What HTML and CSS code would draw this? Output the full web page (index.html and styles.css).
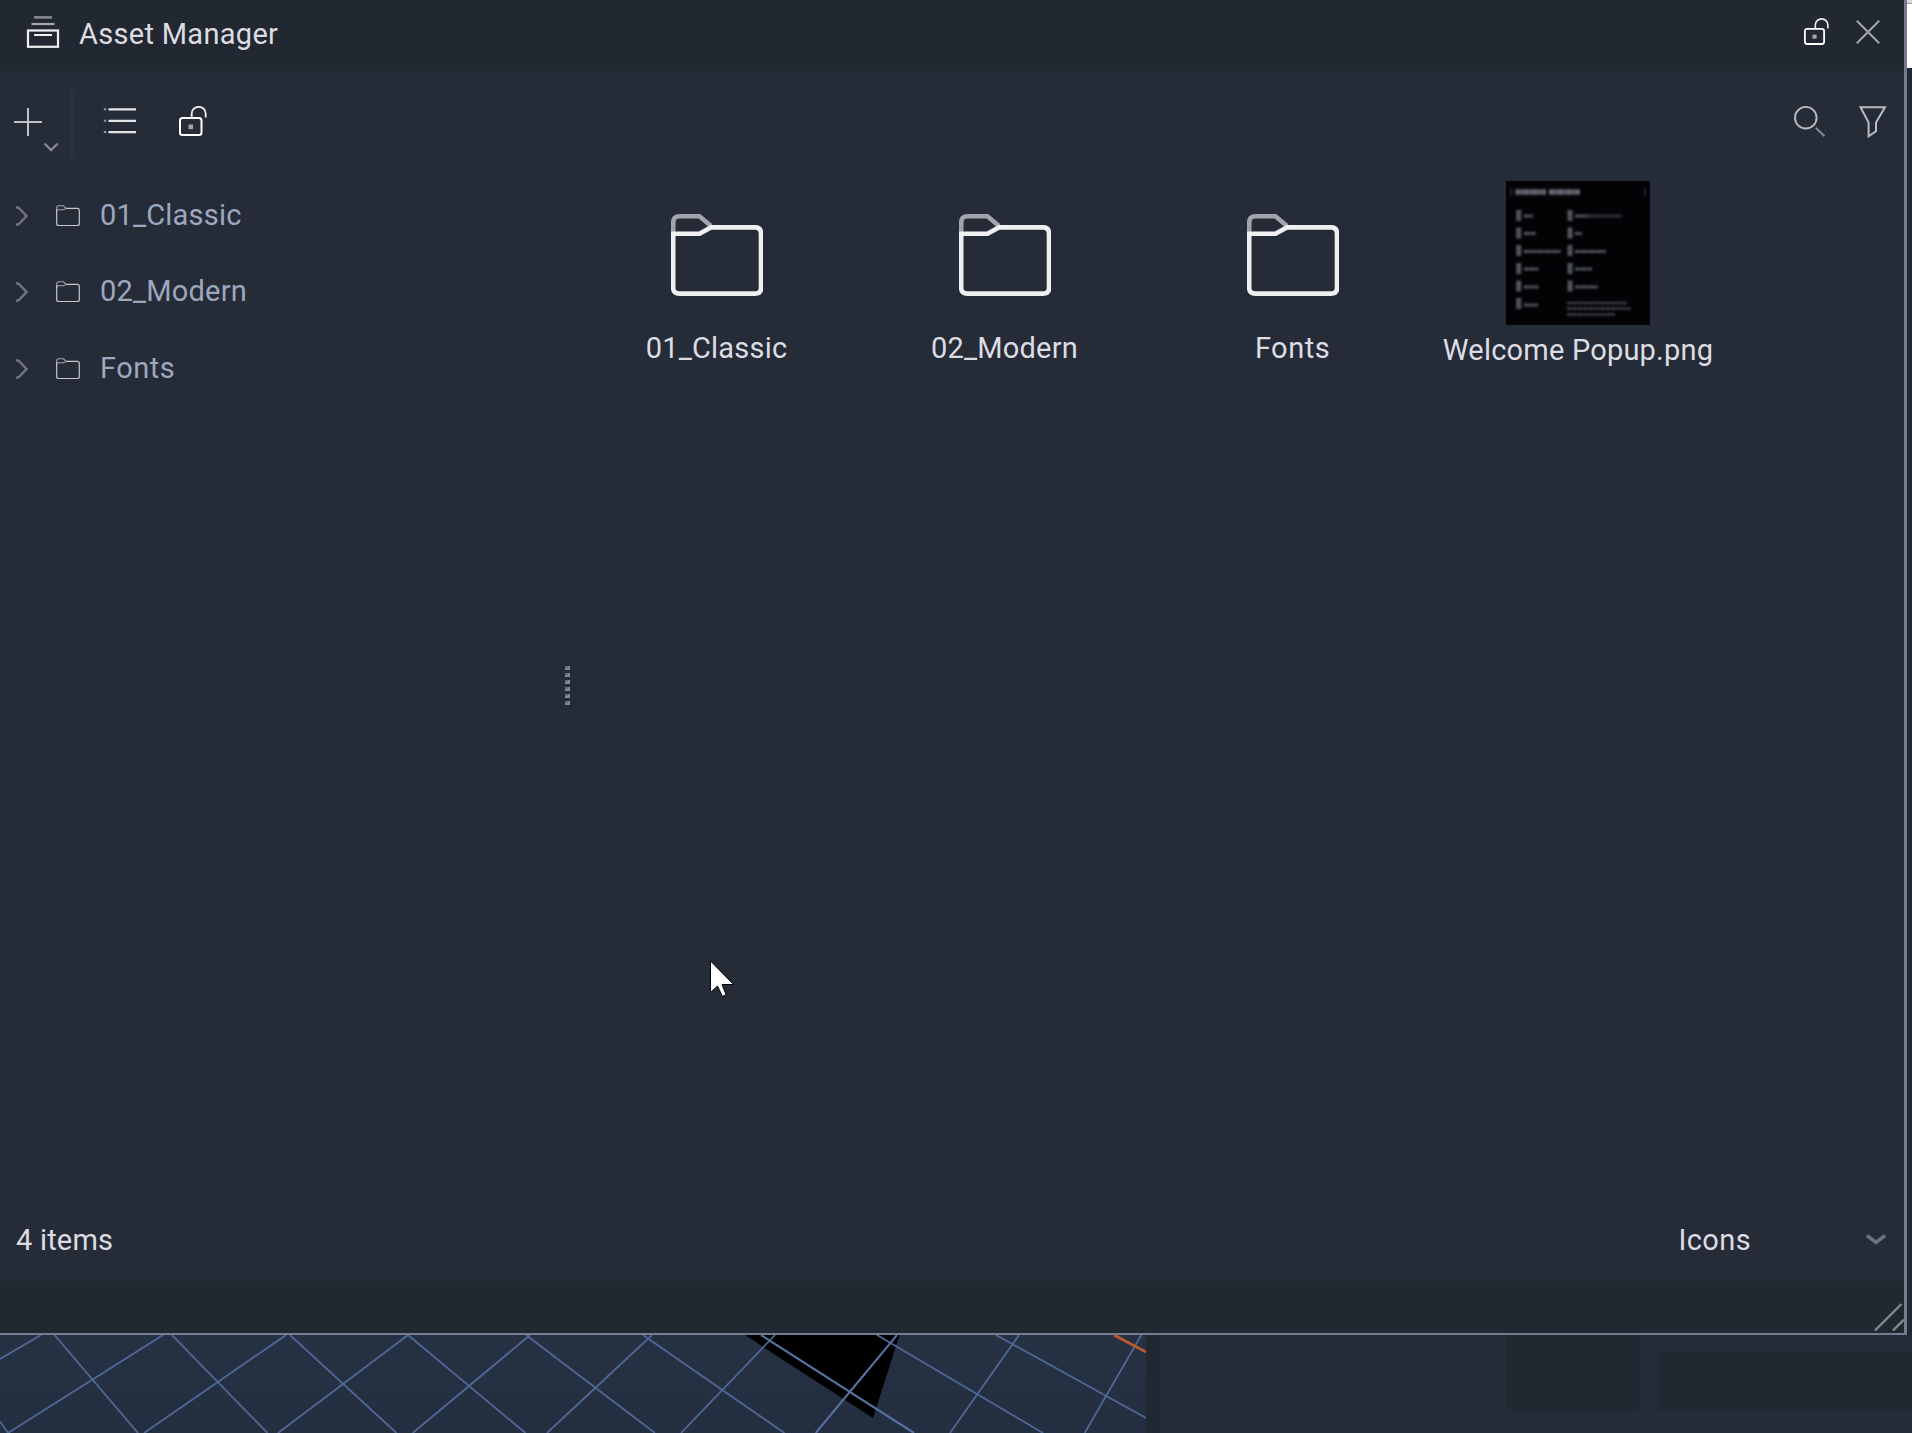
FILE: index.html
```html
<!DOCTYPE html>
<html lang="en">
<head>
<meta charset="utf-8">
<title>Asset Manager</title>
<link rel="stylesheet" href="styles.css">
</head>
<body>
<svg class="defs" width="0" height="0" aria-hidden="true">
  <symbol id="folder-large" viewBox="0 0 92 84">
    <path d="M2.2 20V9.5Q2.2 3.2 8.5 3.2H28.5L40 13" fill="none" stroke="#a1a4aa" stroke-width="4.6"/>
    <path d="M2.2 20.8H28.5L40 14.4H84Q90 14.4 90 20.5V75Q90 80.6 84 80.6H8.5Q2.2 80.6 2.2 75Z" fill="none" stroke="#eff0f1" stroke-width="4.6"/>
  </symbol>
  <symbol id="folder-small" viewBox="0 0 24 22">
    <path d="M.7 7V3Q.7 .8 3 .8H7.5L10 3.4M.7 4.8H7.5L10 3.4" fill="none" stroke="#a3a6aa" stroke-width="1.1"/>
    <path d="M.7 4.8V18.5Q.7 20.5 2.7 20.5H21.3Q23.3 20.5 23.3 18.5V5.4Q23.3 3.4 21.3 3.4H10" fill="none" stroke="#c5c7ca" stroke-width="1.2"/>
  </symbol>
  <symbol id="unlock" viewBox="0 0 28 30">
    <rect x="1" y="12" width="21.5" height="17" rx="2.5" fill="none" stroke="#fff" stroke-width="2"/>
    <rect x="9.5" y="18.5" width="4.6" height="4.6" fill="#a3a6ad"/>
    <path d="M12.7 12V7.5A7 6.7 0 0 1 26.7 7.5V11.5" fill="none" stroke="#eceded" stroke-width="1.8"/>
  </symbol>
  <symbol id="chevron-right" viewBox="0 0 14 22">
    <path d="M1 2L4 3L11.5 11L4 19L1 20" fill="none" stroke="#70747b" stroke-width="2.5"/>
  </symbol>
</svg>
<div class="desktop">
  <div class="upper">
    <section class="window">
      <header class="titlebar">
        <svg class="app-icon" width="34" height="34" viewBox="0 0 34 34">
          <path d="M8 3.4H26" stroke="#8d9197" stroke-width="2.4"/>
          <path d="M5.5 10H28.5" stroke="#a5a8ad" stroke-width="2.2"/>
          <rect x="2" y="16.5" width="30" height="16.3" fill="none" stroke="#eef0f0" stroke-width="2.2"/>
          <path d="M8 21H26" stroke="#eef0f0" stroke-width="2"/>
        </svg>
        <h1 class="title">Asset Manager</h1>
        <svg class="title-lock" viewBox="0 0 28 30"><use href="#unlock"/></svg>
        <svg class="close" width="24" height="24" viewBox="0 0 24 24"><path d="M.8.8L23.2 23.2M23.2.8L.8 23.2" stroke="#a5a8aa" stroke-width="2"/></svg>
      </header>
      <div class="toolbar">
        <svg class="add" width="46" height="46" viewBox="0 0 46 46">
          <path d="M0 14H28M14 0V28" stroke="#c0c3c6" stroke-width="2"/>
          <path d="M30.5 35.5L37 42L43.8 35.5" fill="none" stroke="#84888e" stroke-width="2.4"/>
        </svg>
        <span class="divider"></span>
        <svg class="list" width="33" height="28" viewBox="0 0 33 28">
          <path d="M5.5 2.3H33M5.5 13.8H33M5.5 25.1H33" stroke="#e1e4e5" stroke-width="2.2"/>
          <path d="M.8 2.3H3.2M.8 13.8H3.2M.8 25.1H3.2" stroke="#9599a0" stroke-width="2"/>
        </svg>
        <svg class="tool-lock" viewBox="0 0 28 30"><use href="#unlock"/></svg>
        <svg class="search" width="32" height="32" viewBox="0 0 32 32">
          <circle cx="11.8" cy="11.7" r="10.8" fill="none" stroke="#b9bdbf" stroke-width="1.9"/>
          <path d="M21.8 21.7L30.5 30.3" stroke="#81858c" stroke-width="2.2"/>
        </svg>
        <svg class="filter" width="28" height="32" viewBox="0 0 28 32"><path d="M1.5 1.3H26L17 16.5V25.3L9.6 30.3V16.5Z" fill="none" stroke="#b8bcbf" stroke-width="2"/></svg>
      </div>
      <main class="content">
        <nav class="tree">
          <div class="tree-row"><svg class="chev"><use href="#chevron-right"/></svg><svg class="small"><use href="#folder-small"/></svg><span>01_Classic</span></div>
          <div class="tree-row"><svg class="chev"><use href="#chevron-right"/></svg><svg class="small"><use href="#folder-small"/></svg><span>02_Modern</span></div>
          <div class="tree-row"><svg class="chev"><use href="#chevron-right"/></svg><svg class="small"><use href="#folder-small"/></svg><span class="wide">Fonts</span></div>
        </nav>
        <div class="splitter"><i></i><i></i><i></i><i></i><i></i><i></i></div>
        <div class="assets">
          <div class="asset"><svg class="large"><use href="#folder-large"/></svg><span>01_Classic</span></div>
          <div class="asset"><svg class="large"><use href="#folder-large"/></svg><span>02_Modern</span></div>
          <div class="asset"><svg class="large"><use href="#folder-large"/></svg><span class="wide">Fonts</span></div>
          <div class="asset picture">
            <svg class="thumb" width="144" height="144" viewBox="0 0 144 144">
              <defs><filter id="soft" x="-10%" y="-10%" width="120%" height="120%"><feGaussianBlur stdDeviation="1"/></filter></defs>
              <rect width="144" height="144" fill="#030306"/>
              <g filter="url(#soft)" fill="none">
                <path d="M9.5 11H40M43 11H74" stroke="#666a72" stroke-width="5.5" stroke-dasharray="5 .5 3 .4"/>
                <path d="M5 7V15M139 7V15" stroke="#191b20" stroke-width="3"/>
                <g stroke="#50545d" stroke-width="5">
                  <path d="M12.7 29V40M12.7 46.5V57.5M12.7 64V75M12.7 82V93M12.7 99.5V110.5M12.7 117V128"/>
                  <path d="M64 29V40M64 46.5V57.5M64 64V75M64 82V93M64 99.5V110.5"/>
                </g>
                <g stroke="#555961" stroke-width="3.2" stroke-dasharray="4 .5 2.5 .4">
                  <path d="M18 35H27M18 52.5H30M18 70.5H55M18 88H33M18 106H33M18 124H32"/>
                  <path d="M69 35H82M69 52.5H76M69 70.5H100M69 88H86M69 106H92"/>
                </g>
                <path d="M82 35H116" stroke="#2b2e34" stroke-width="3.5" stroke-dasharray="4 .5"/>
                <path d="M61 122H121M61 127.5H125M61 133.5H109" stroke="#3c4047" stroke-width="2.3" stroke-dasharray="5 .5"/>
              </g>
            </svg>
            <span>Welcome Popup.png</span>
          </div>
        </div>
      </main>
      <footer class="status">
        <span>4 items</span>
        <span class="view-mode">Icons</span>
        <svg class="view-arrow" width="20" height="14" viewBox="0 0 20 14"><path d="M1 2.5L10 9.5L19 2.5" fill="none" stroke="#6d7179" stroke-width="3.6"/></svg>
      </footer>
      <div class="bottom-bar">
        <svg width="31" height="30" viewBox="0 0 31 30"><path d="M2 27.5L28.5 1M20 27.5L31 16.5" stroke="#84888f" stroke-width="2.4"/></svg>
      </div>
    </section>
    <aside class="edge"><div class="edge-cap"></div><div class="edge-white"></div></aside>
  </div>
  <div class="lower">
    <svg class="scene" width="1146" height="98" viewBox="0 1335 1146 98">
      <defs><linearGradient id="ground" x2="0" y2="1"><stop stop-color="#273144"/><stop offset="1" stop-color="#242e41"/></linearGradient></defs>
      <rect y="1335" width="1146" height="98" fill="url(#ground)"/>
      <path d="M745 1335L780 1358L873 1418L899.5 1335Z" fill="#000"/>
      <g fill="none" stroke="#4e6995" stroke-width="1.8">
        <path d="M0 1359L41 1335M8 1433L163 1335M144 1433L286 1335M278 1433L408 1335M412.7 1433L530 1335M547 1433L652 1335M681 1433L775 1335M950 1433L1019 1335M1084.7 1433L1141.3 1335"/>
        <path d="M0 1421.5L8 1433M54.5 1335L138 1433M172 1335L267.5 1433M290 1335L396.5 1433M408 1335L525.5 1433M526 1335L655 1433M643 1335L784.5 1433M877 1335L1043 1433M996 1335L1146 1418"/>
      </g>
      <path d="M761 1335L914 1433M815.7 1433L897 1335" stroke="#56719f" stroke-width="2.1"/>
      <path d="M1114 1335L1146 1352" stroke="#bd592c" stroke-width="2.8"/>
    </svg>
    <div class="dock-gap"></div>
    <div class="dock"><div class="dock-tab"></div><div class="dock-field"></div></div>
  </div>
</div>
<svg class="pointer" width="28" height="40" viewBox="0 0 28 40"><path d="M1.5 2V33.5L8.5 27L13.5 37.5L17 35.5L13 25.5H24.5Z" fill="#fff" stroke="#06080b" stroke-width="1"/></svg>
</body>
</html>
```

FILE: styles.css
```css
* { box-sizing: border-box; }
body {
  margin: 0;
  overflow: hidden;
  background: #252b37;
  font-family: Roboto, "Liberation Sans", sans-serif;
  font-size: 29px;
  letter-spacing: .2px;
  line-height: 36px;
  color: #dcdde3;
}
svg { display: block; flex: none; }
.defs { position: absolute; }
.desktop { display: flex; flex-direction: column; width: 1912px; height: 1433px; }
.upper { display: flex; height: 1335px; }
.window {
  display: flex;
  flex-direction: column;
  width: 1907px;
  border-right: 3px solid #747c8d;
  border-bottom: 2px solid #747c8d;
  background: #252b37;
}
.titlebar { display: flex; height: 71px; padding: 15px 24px 0 26px; background: #222831; }
.app-icon { margin-top: -1px; }
.title { margin: 1px auto 0 19px; font-size: 29px; font-weight: 400; letter-spacing: .3px; }
.title-lock { width: 25px; height: 27px; margin: 3px 27.5px 0 0; }
.close { margin-top: 5px; }
.toolbar { display: flex; height: 102px; padding: 18px 17px 0 14px; border-bottom: 1px solid #222832; border-radius: 0 0 6px 6px; }
.add { margin-top: 19px; }
.divider { width: 5px; height: 69px; margin-left: 10px; background: #2b313c; }
.list { margin: 18px 0 0 28px; }
.tool-lock { width: 28px; height: 30px; margin: 17px auto 0 42.5px; }
.search { margin: 17px 33px 0 0; }
.filter { margin-top: 17px; }
.content { display: flex; flex: 1; min-height: 0; }
.tree { width: 565px; padding-top: 4px; color: #9ba8bd; }
.tree-row { display: flex; align-items: center; height: 76px; padding-left: 15px; }
.tree-row:nth-child(2) { margin-bottom: 1px; }
.tree-row .chev { width: 14px; height: 22px; margin-top: 2px; }
.tree-row .small { width: 24px; height: 22px; margin: 1px 20px 0 27px; }
.wide { letter-spacing: .5px; }
.splitter { display: flex; flex-direction: column; gap: 3px; width: 5px; padding-top: 493px; }
.splitter i { width: 5px; height: 4px; border: solid #858993; border-width: 0 2px 2px 0; background: #666b75; }
.assets { display: flex; flex: 1; padding: 8px 0 0 2.5px; }
.asset { display: flex; flex-direction: column; align-items: center; width: 288px; white-space: nowrap; }
.asset .large { width: 92px; height: 84px; margin: 32px 0 33px 1px; }
.picture { margin-left: -2.5px; }
.thumb { margin-bottom: 7px; }
.status { display: flex; height: 84px; padding: 25px 18px 0 16px; }
.view-mode { margin-left: auto; letter-spacing: .4px; }
.view-arrow { margin: 11px 0 0 115px; }
.bottom-bar { display: flex; justify-content: flex-end; align-items: flex-end; height: 52px; background: #222831; }
.edge { flex: 1; background: #222831; }
.edge-cap { height: 4px; background: #d8d9db; border-bottom: 1px solid #999; }
.edge-white { height: 64px; background: #fff; }
.lower { display: flex; height: 98px; }
.dock-gap { width: 14px; background: #222831; }
.dock { display: flex; flex: 1; align-items: flex-start; gap: 19px; padding-left: 346px; background: #252b37; }
.dock-tab { width: 134px; height: 76px; background: #202730; border-radius: 0 0 8px 8px; }
.dock-field { flex: 1; height: 60px; margin-top: 16px; background: #222831; border-radius: 4px 0 0 4px; }
.pointer { position: absolute; left: 709px; top: 959px; }
```
